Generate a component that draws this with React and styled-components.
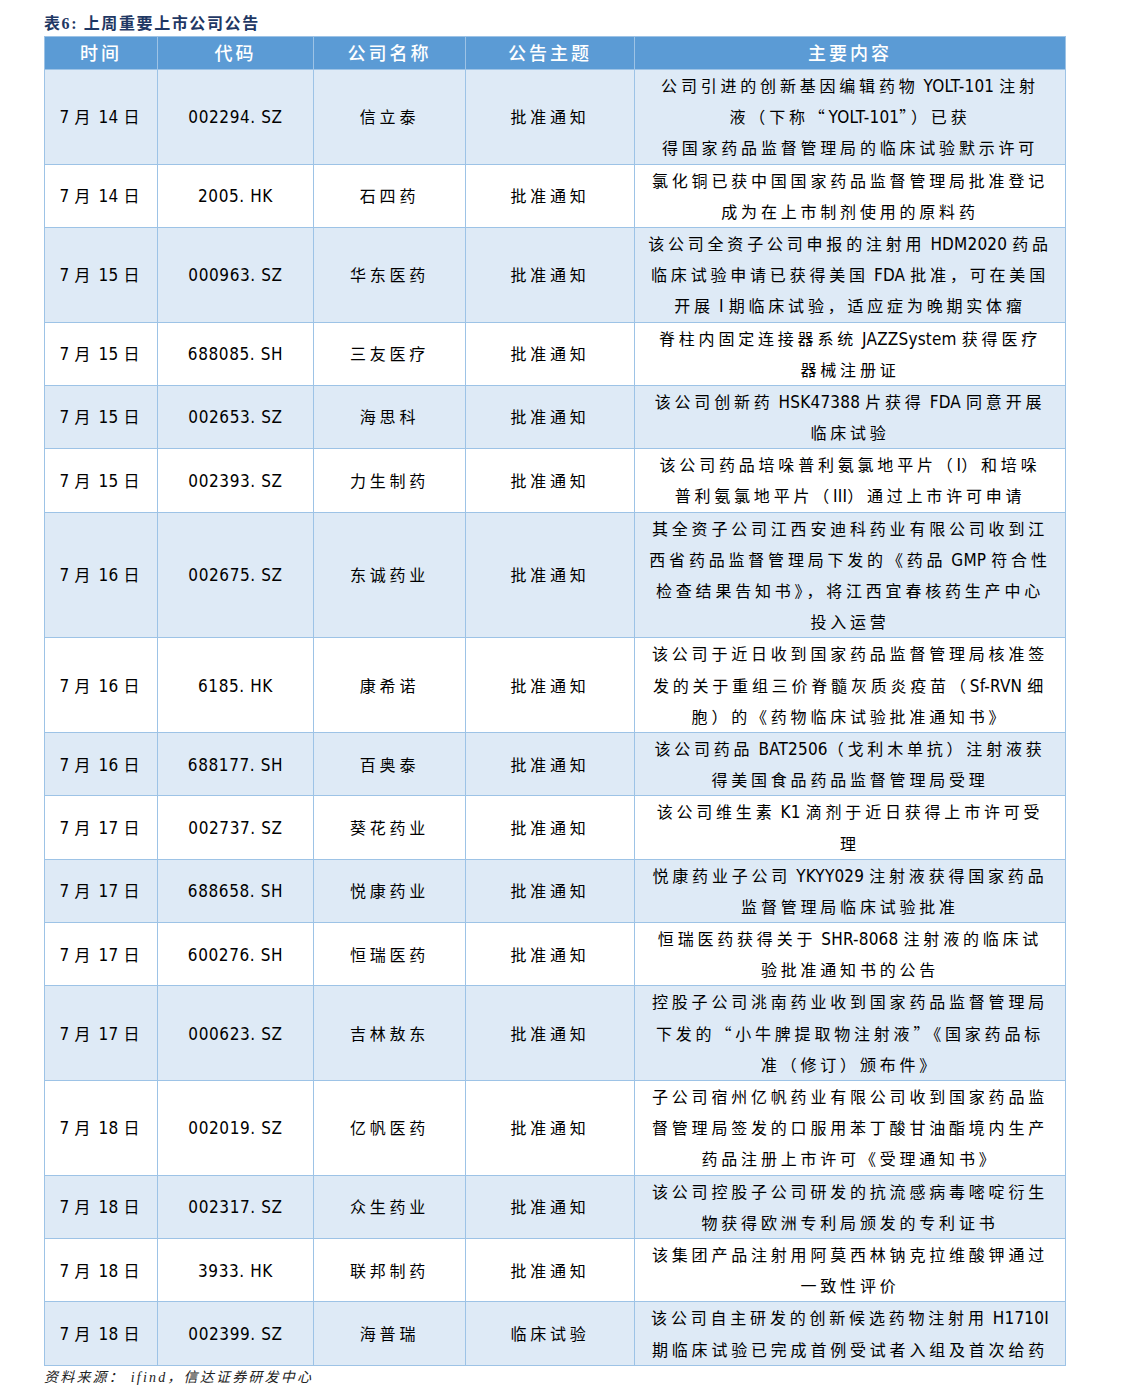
import styled, { createGlobalStyle } from 'styled-components';

const GlobalStyle = createGlobalStyle`
  html, body {
    margin: 0;
    padding: 0;
    background: #ffffff;
  }
  body {
    font-family: "Noto Sans CJK SC", "Liberation Sans", sans-serif;
    color: #000;
  }
`;

const Page = styled.div`
  width: 1137px;
  padding: 13px 0 0 44px;
  box-sizing: border-box;
`;

const Title = styled.div`
  font-family: "Liberation Serif", "Noto Sans CJK SC", serif;
  font-weight: 700;
  font-size: 16px;
  line-height: 22px;
  color: #1f3864;
  letter-spacing: 1.6px;
  height: 23px;
`;

const Table = styled.table`
  border-collapse: collapse;
  table-layout: fixed;
  width: 1021px;
  border: 1px solid #9dc3e6;
`;

const HeadCell = styled.th`
  background: #5b9bd5;
  color: #ffffff;
  font-weight: 500;
  font-size: 18px;
  line-height: 28px;
  letter-spacing: 3px;
  height: 29px;
  padding: 0 0 3px;
  border-left: 1px solid #9dc3e6;
  border-right: 1px solid #9dc3e6;
  text-align: center;
  vertical-align: middle;
`;

const Row = styled.tr`
  background: ${(p) => (p.$shaded ? '#deeaf6' : '#ffffff')};
`;

const Cell = styled.td`
  border: 1px solid #9dc3e6;
  padding: 0;
  text-align: center;
  vertical-align: middle;
  font-size: 16px;
  line-height: 31.2px;
  letter-spacing: ${(p) => (p.$wide ? '3.8px' : '3px')};
  color: #000;
`;

const Line = styled.div`
  height: 31.2px;
  line-height: 31.2px;
  white-space: nowrap;
`;

const Latin = styled.span`
  font-family: "DejaVu Sans Condensed", "Liberation Sans Narrow", "Liberation Sans", sans-serif;
  font-size: 17px;
  line-height: 1;
  letter-spacing: ${(p) => (p.$code ? '0.6px' : '0.2px')};
`;

const Source = styled.div`
  font-family: "Liberation Serif", "Noto Sans CJK SC", serif;
  font-style: italic;
  font-size: 14px;
  line-height: 22px;
  color: #222;
  padding-top: 1px;
  letter-spacing: 2.2px;
`;

const columns = [
  { label: '时间', width: 113 },
  { label: '代码', width: 156 },
  { label: '公司名称', width: 152 },
  { label: '公告主题', width: 169 },
  { label: '主要内容', width: 431 },
];

const rows = [
  ['7 月 14 日', '002294. SZ', '信立泰', '批准通知', ['公司引进的创新基因编辑药物 YOLT-101 注射', '液（下称“YOLT-101”）已获', '得国家药品监督管理局的临床试验默示许可']],
  ['7 月 14 日', '2005. HK', '石四药', '批准通知', ['氯化铜已获中国国家药品监督管理局批准登记', '成为在上市制剂使用的原料药']],
  ['7 月 15 日', '000963. SZ', '华东医药', '批准通知', ['该公司全资子公司申报的注射用 HDM2020 药品', '临床试验申请已获得美国 FDA 批准，可在美国', '开展 I 期临床试验，适应症为晚期实体瘤']],
  ['7 月 15 日', '688085. SH', '三友医疗', '批准通知', ['脊柱内固定连接器系统 JAZZSystem 获得医疗', '器械注册证']],
  ['7 月 15 日', '002653. SZ', '海思科', '批准通知', ['该公司创新药 HSK47388 片获得 FDA 同意开展', '临床试验']],
  ['7 月 15 日', '002393. SZ', '力生制药', '批准通知', ['该公司药品培哚普利氨氯地平片（I）和培哚', '普利氨氯地平片（III）通过上市许可申请']],
  ['7 月 16 日', '002675. SZ', '东诚药业', '批准通知', ['其全资子公司江西安迪科药业有限公司收到江', '西省药品监督管理局下发的《药品 GMP 符合性', '检查结果告知书》，将江西宜春核药生产中心', '投入运营']],
  ['7 月 16 日', '6185. HK', '康希诺', '批准通知', ['该公司于近日收到国家药品监督管理局核准签', '发的关于重组三价脊髓灰质炎疫苗（Sf-RVN 细', '胞）的《药物临床试验批准通知书》']],
  ['7 月 16 日', '688177. SH', '百奥泰', '批准通知', ['该公司药品 BAT2506（戈利木单抗）注射液获', '得美国食品药品监督管理局受理']],
  ['7 月 17 日', '002737. SZ', '葵花药业', '批准通知', ['该公司维生素 K1 滴剂于近日获得上市许可受', '理']],
  ['7 月 17 日', '688658. SH', '悦康药业', '批准通知', ['悦康药业子公司 YKYY029 注射液获得国家药品', '监督管理局临床试验批准']],
  ['7 月 17 日', '600276. SH', '恒瑞医药', '批准通知', ['恒瑞医药获得关于 SHR-8068 注射液的临床试', '验批准通知书的公告']],
  ['7 月 17 日', '000623. SZ', '吉林敖东', '批准通知', ['控股子公司洮南药业收到国家药品监督管理局', '下发的“小牛脾提取物注射液”《国家药品标', '准（修订）颁布件》']],
  ['7 月 18 日', '002019. SZ', '亿帆医药', '批准通知', ['子公司宿州亿帆药业有限公司收到国家药品监', '督管理局签发的口服用苯丁酸甘油酯境内生产', '药品注册上市许可《受理通知书》']],
  ['7 月 18 日', '002317. SZ', '众生药业', '批准通知', ['该公司控股子公司研发的抗流感病毒嘧啶衍生', '物获得欧洲专利局颁发的专利证书']],
  ['7 月 18 日', '3933. HK', '联邦制药', '批准通知', ['该集团产品注射用阿莫西林钠克拉维酸钾通过', '一致性评价']],
  ['7 月 18 日', '002399. SZ', '海普瑞', '临床试验', ['该公司自主研发的创新候选药物注射用 H1710I', '期临床试验已完成首例受试者入组及首次给药']],
];

// wrap runs of ASCII in a narrower latin face so CJK keeps its wide tracking
const mixed = (text, code) =>
  text.split(/([\x20-\x7E]+)/).map((part, i) =>
    /^[\x20-\x7E]+$/.test(part) ? (
      <Latin key={i} $code={code}>{part}</Latin>
    ) : (
      part
    )
  );

const App = () => {
  return (
    <Page>
      <GlobalStyle />
      <Title>表6: 上周重要上市公司公告</Title>
      <Table>
        <colgroup>
          {columns.map((c) => (
            <col key={c.label} style={{ width: c.width }} />
          ))}
        </colgroup>
        <thead>
          <tr>
            {columns.map((c) => (
              <HeadCell key={c.label}>{c.label}</HeadCell>
            ))}
          </tr>
        </thead>
        <tbody>
          {rows.map((r, i) => (
            <Row key={r[1]} $shaded={i % 2 === 0}>
              <Cell>{mixed(r[0])}</Cell>
              <Cell>{mixed(r[1], true)}</Cell>
              <Cell $wide>{r[2]}</Cell>
              <Cell $wide>{r[3]}</Cell>
              <Cell $wide>
                {r[4].map((line, j) => (
                  <Line key={j}>{mixed(line)}</Line>
                ))}
              </Cell>
            </Row>
          ))}
        </tbody>
      </Table>
      <Source>资料来源： ifind，信达证券研发中心</Source>
    </Page>
  );
};

export default App;
